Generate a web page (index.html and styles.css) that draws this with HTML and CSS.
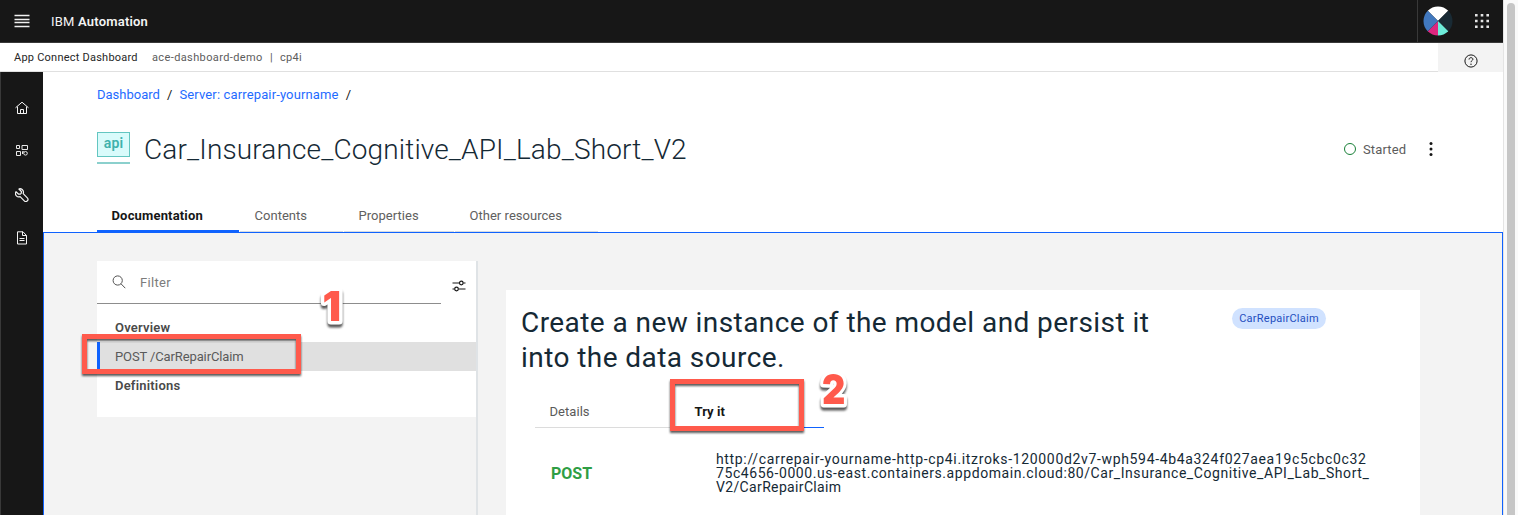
FILE: index.html
```html
<!DOCTYPE html>
<html lang="en">
<head>
<meta charset="utf-8">
<title>App Connect Dashboard</title>
<link rel="stylesheet" href="styles.css">
</head>
<body>
<div class="window">
  <div class="app">
    <header class="topbar">
      <svg class="menu-icon" width="16" height="14" viewBox="0 0 16 14"><path d="M.5 1.500h15M.5 5.500h15M.5 8.500h15M.5 12.500h15" stroke="#f0f0f0" stroke-width="1.300"/></svg>
      <div class="brand">IBM <b>Automation</b></div>
      <div class="topbar-right">
        <svg class="avatar" width="30" height="30" viewBox="0 0 30 30">
          <clipPath id="disc"><circle cx="15" cy="15" r="14.500"/></clipPath>
          <g clip-path="url(#disc)">
            <path d="M15 15 4 4V0h22v4z" fill="#fff"/>
            <path d="M15 15 26 4h4v22h-4z" fill="#192a34"/>
            <path d="M15 15 26 26v4H15z" fill="#6eeddb"/>
            <path d="M15 15v15H4v-4z" fill="#dc267f"/>
            <path d="M15 15 4 26H0V4h4z" fill="#4178be"/>
          </g>
        </svg>
        <svg class="switcher" width="14" height="14" viewBox="0 0 14 14" fill="#e4e4e4"><path d="M0 0h2.600v2.600H0zM5.700 0h2.600v2.600H5.700zM11.400 0H14v2.600h-2.600zM0 5.700h2.600v2.600H0zM5.700 5.700h2.600v2.600H5.700zM11.400 5.700H14v2.600h-2.600zM0 11.400h2.600V14H0zM5.700 11.400h2.600V14H5.700zM11.400 11.400H14V14h-2.600z"/></svg>
      </div>
    </header>
    <div class="subbar">
      <span class="product">App Connect Dashboard</span>
      <span class="instance">ace-dashboard-demo</span>
      <span class="divider">|</span>
      <span class="namespace">cp4i</span>
      <div class="help">
        <svg width="14" height="14" viewBox="0 0 14 14" fill="none" stroke="#161616"><circle cx="7" cy="7" r="6.100"/><path d="M5.100 5.600V5.300c0-.9.7-1.600 1.900-1.600s1.900.6 1.900 1.600C8.900 6.500 7 6.500 7 8.200"/><circle cx="7" cy="10.200" r=".7" fill="#161616" stroke="none"/></svg>
      </div>
    </div>
    <div class="body">
      <nav class="rail">
        <svg width="14" height="14" viewBox="0 0 14 14" fill="none" stroke="#f4f4f4"><path d="M.5 6.800 7 1.200l6.500 5.600M2.500 5.600v6.900h9V5.600M5.500 12.500V8.500h3v4"/></svg>
        <svg width="14" height="14" viewBox="0 0 14 14" fill="none" stroke="#e8e8e8"><path d="M1.500 1.500h3v3h-3zM7 1.500h5.500v4H7zM1.500 7.500h4v4h-4zM7 7.800h2M7.500 7.800v2.200"/><circle cx="10.500" cy="9.300" r="1.800"/></svg>
        <svg width="14" height="14" viewBox="0 0 14 14" fill="none" stroke="#f4f4f4" stroke-width="1.200" stroke-linejoin="round"><path d="M5 .7 3.900 1l2.500 2.500-.1 1.700-.9.900-1.700.1L1 3.700C.1 5.200.4 6.800 1.400 7.800s2.400 1.300 3.700.8l4.200 4.200c.9.9 2.200.9 3 .1.900-.9.900-2.100 0-3L8.200 5.700C8.700 4.300 8.400 2.600 7.200 1.500 6.500.9 5.800.7 5 .7z"/></svg>
        <svg width="14" height="14" viewBox="0 0 14 14" fill="none" stroke="#f4f4f4"><path d="M2.500.8H8l3.500 3.700v8.500H2.500zM7.500.8v3.700h4M4.500 7.500h5M4.500 9.500h5"/></svg>
      </nav>
      <div class="page">
        <section class="hero">
          <div class="crumbs"><a class="crumb-home">Dashboard</a><i>/</i><a>Server: carrepair-yourname</a><i>/</i></div>
          <div class="title-row">
            <div class="api-icon"><span>api</span></div>
            <h1>Car_Insurance_Cognitive_API_Lab_Short_V2</h1>
            <div class="status"><span class="ring"></span><span class="status-text">Started</span></div>
            <svg class="kebab" width="4" height="14" viewBox="0 0 4 14" fill="#161616"><circle cx="2" cy="1.500" r="1.500"/><circle cx="2" cy="7" r="1.500"/><circle cx="2" cy="12.500" r="1.500"/></svg>
          </div>
          <div class="tabs">
            <div class="tab tab-doc"><span>Documentation</span></div>
            <div class="tab tab-con"><span>Contents</span></div>
            <div class="tab tab-prop"><span>Properties</span></div>
            <div class="tab tab-res"><span>Other resources</span></div>
          </div>
        </section>
        <main class="content">
          <aside class="side">
            <div class="side-panel">
              <div class="filter-row">
                <div class="filter">
                  <svg width="14" height="14" viewBox="0 0 14 14" fill="none" stroke="#525252"><circle cx="5.700" cy="5.500" r="4.600"/><path d="m9 8.800 4.300 4.400"/></svg>
                  <span>Filter</span>
                </div>
                <svg class="settings" width="14" height="12" viewBox="0 0 14 12" fill="none" stroke="#161616" stroke-width="1.200"><path d="M.5 3h6.800M11.300 3h2.200M.5 9h2M6.500 9h7"/><circle cx="9.300" cy="3" r="1.800"/><circle cx="4.500" cy="9" r="1.800"/></svg>
              </div>
              <div class="item strong ov">Overview</div>
              <div class="item selected"><span>POST /CarRepairClaim</span>
                <div class="callout callout-one"></div>
              </div>
              <div class="item strong def">Definitions</div>
              <svg class="number number-one" width="40" height="50" viewBox="0 0 40 50"><text transform="translate(10.500 35)">1</text></svg>
            </div>
          </aside>
          <article class="card">
            <div class="card-head">
              <h2><span class="line-a">Create a new instance of the model and persist it</span><br><span class="line-b">into the data source.</span></h2>
              <span class="tag">CarRepairClaim</span>
            </div>
            <div class="subtabs">
              <div class="subtab details">Details</div>
              <div class="subtab try">Try it
                <div class="callout callout-two"></div>
                <svg class="number number-two" width="44" height="50" viewBox="0 0 44 50"><text transform="translate(8 35) scale(.88 1)">2</text></svg>
              </div>
            </div>
            <div class="endpoint">
              <b class="method">POST</b>
              <div class="url"><span class="u1">http://carrepair-yourname-http-cp4i.itzroks-120000d2v7-wph594-4b4a324f027aea19c5cbc0c32</span><br><span class="u2">75c4656-0000.us-east.containers.appdomain.cloud:80/Car_Insurance_Cognitive_API_Lab_Short_</span><br><span class="u3">V2/CarRepairClaim</span></div>
            </div>
          </article>
        </main>
      </div>
    </div>
  </div>
  <div class="scrollbar"><div class="thumb"></div></div>
</div>
</body>
</html>
```
FILE: styles.css
```css
* { box-sizing: border-box; }
body { margin: 0; overflow: hidden; font-family: Roboto, "Noto Sans", sans-serif; font-size: 13px; color: #161616; background: #fff; }
svg { display: block; flex: none; }
.window { display: flex; width: 1518px; height: 515px; }
.app { width: 1503px; display: flex; flex-direction: column; }
.topbar { height: 43px; flex: none; display: flex; align-items: center; background: #171717; border-bottom: 1px solid #393939; color: #f4f4f4; padding-left: 14px; }
.brand { margin-left: 21px; letter-spacing: .2px; white-space: nowrap; }
.brand b { font-weight: 600; }
.topbar-right { margin-left: auto; width: 86px; height: 42px; display: flex; align-items: center; border-left: 1px solid #393939; padding-left: 5px; }
.switcher { margin-left: 22px; }
.subbar { height: 29px; flex: none; display: flex; align-items: center; padding-left: 14px; font-size: 11px; color: #5c5c5c; border-bottom: 1px solid #e0e0e0; letter-spacing: .3px; white-space: nowrap; }
.product { color: #262626; width: 138px; letter-spacing: .23px; }
.instance { width: 118px; letter-spacing: .38px; }
.divider { width: 10px; }
.help { margin-left: auto; width: 65px; height: 29px; background: #f3f3f3; margin-bottom: -1px; padding: 11px 0 0 25.500px; }
.body { display: flex; flex: 1; min-height: 0; }
.rail { width: 43px; flex: none; background: #171717; padding: 29px 0 0 13.500px; display: flex; flex-direction: column; gap: 29.300px; border-left: 1px solid #393939; }
.page { flex: 1; display: flex; flex-direction: column; min-width: 0; }
.hero { height: 160px; flex: none; padding: 15px 0 0 54px; display: flex; flex-direction: column; }
.crumbs { height: 16px; line-height: 16px; display: flex; color: #1f6bff; letter-spacing: .14px; }
.crumb-home { letter-spacing: 0; }
.crumbs i { color: #161616; font-style: normal; margin: 0 7px; }
.title-row { display: flex; align-items: center; height: 42px; margin-top: 25px; }
.api-icon { width: 33px; height: 32px; border-bottom: 2px solid #8bd0cd; margin-top: -3px; flex: none; }
.api-icon span { display: block; height: 25px; border: 1px solid #63c6c1; background: #d9fbfb; color: #3fb1ac; font: 600 14px/21px Roboto, sans-serif; letter-spacing: .2px; text-align: center; }
h1 { font-size: 28px; font-weight: 300; color: #152935; margin: 2px 0 0 14px; letter-spacing: .14px; width: 1200px; line-height: 40px; white-space: nowrap; }
.status { display: flex; align-items: center; width: 85px; color: #5c5c5c; letter-spacing: .13px; }
.ring { width: 12px; height: 12px; border: 1px solid #198038; border-radius: 50%; margin-right: 7px; }
.tabs { display: flex; margin-top: 21px; height: 41px; gap: 1px; color: #606060; letter-spacing: .03px; white-space: nowrap; }
.tab { padding: 17px 0 0 14.500px; line-height: 16px; border-bottom: 1px solid #d8dce0; }
.tab-doc { width: 142px; color: #161616; font-weight: 700; border-bottom: 2px solid #0f62fe; letter-spacing: .17px; }
.tab-con { width: 103px; }
.tab-prop { width: 110px; }
.tab-res { width: 143px; }
.content { flex: 1; border: solid #0f62fe; border-width: 1px 1px 0; background: #f3f3f3; padding: 28px 0 0 53px; display: flex; min-height: 0; }
.side { width: 381px; flex: none; border-right: 2px solid #dfe3e6; }
.side-panel { position: relative; height: 156px; background: #fff; color: #5a5a5a; letter-spacing: -.12px; }
.filter-row { display: flex; height: 43px; }
.filter { width: 344px; border-bottom: 1px solid #8d8d8d; display: flex; align-items: center; padding-left: 15px; color: #7c7c7c; letter-spacing: .3px; }
.filter span { margin-left: 14px; }
.settings { margin: 19px 0 0 10.500px; }
.item { height: 29px; line-height: 29px; padding-left: 18px; }
.strong { font-weight: 600; color: #4a4a4a; letter-spacing: .2px; }
.ov { margin-top: 9px; }
.selected { position: relative; background: #e0e0e0; border-left: 3px solid #0f62fe; padding-left: 15px; }
.callout { position: absolute; border: 5px solid #ff5a4c; filter: drop-shadow(0 2px 1px rgba(0,0,0,.65)); }
.callout-one { left: -18px; top: -8px; width: 219px; height: 40px; }
.number { position: absolute; overflow: visible; filter: drop-shadow(0 3px 1px rgba(0,0,0,.65)); }
.number text { font: 900 41px Inter, "Liberation Sans", sans-serif; letter-spacing: 0; fill: #ff5a4c; stroke: #fff; stroke-width: 7px; stroke-linejoin: round; paint-order: stroke; }
.number-one { left: 215px; top: 25px; }
.card { margin: 29px 0 0 28px; width: 914px; background: #fff; padding: 15px 0 0 15px; }
.card-head { display: flex; align-items: flex-start; height: 95px; }
h2 { width: 711px; margin: 0; font-size: 28px; font-weight: 400; line-height: 35px; color: #152935; white-space: nowrap; letter-spacing: .43px; }
.tag { margin-top: 3px; width: 94px; height: 21px; line-height: 21px; border-radius: 11px; background: #d0e2ff; color: #1f4fc0; font-size: 11px; text-align: center; letter-spacing: .25px; }
.subtabs { display: flex; margin-left: 14px; height: 28px; line-height: 24px; letter-spacing: .05px; }
.subtab { width: 145px; padding-left: 14.500px; border-bottom: 1px solid #dcdcdc; }
.details { color: #5a5a5a; }
.try { position: relative; font-weight: 700; border-bottom-color: #0f62fe; width: 144px; }
.callout-two { left: -10px; top: -21px; width: 134px; height: 52px; }
.number-two { left: 134px; top: -31px; }
.endpoint { display: flex; margin-top: 24px; }
.method { width: 165px; padding-left: 30px; color: #2f9e44; font-size: 16px; line-height: 44px; }
.url { width: 660px; margin-left: 30px; font-size: 14px; line-height: 14px; color: #152935; white-space: nowrap; }
.u1 { letter-spacing: .66px; }
.u2 { letter-spacing: .57px; }
.u3 { letter-spacing: .35px; }
.scrollbar { width: 15px; background: #fafafa; border-left: 1px solid #e4e4e4; padding: 3px 0 0 3px; }
.thumb { width: 8px; height: 512px; background: #c6c6c6; border-radius: 4px 4px 0 0; }
```
